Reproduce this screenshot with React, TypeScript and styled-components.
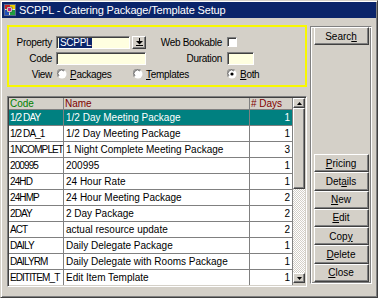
import styled, { createGlobalStyle, css } from 'styled-components';

type Pkg = { code: string; name: string; days: number };

const packages: Pkg[] = [
  { code: '1/2 DAY', name: '1/2 Day Meeting Package', days: 1 },
  { code: '1/2 DA_1', name: '1/2 Day Meeting Package', days: 1 },
  { code: '1NCOMPLET', name: '1 Night Complete Meeting Package', days: 3 },
  { code: '200995', name: '200995', days: 1 },
  { code: '24HD', name: '24 Hour Rate', days: 1 },
  { code: '24HMP', name: '24 Hour Meeting Package', days: 2 },
  { code: '2DAY', name: '2 Day Package', days: 2 },
  { code: 'ACT', name: 'actual resource update', days: 2 },
  { code: 'DAILY', name: 'Daily Delegate Package', days: 1 },
  { code: 'DAILYRM', name: 'Daily Delegate with Rooms Package', days: 1 },
  { code: 'EDITITEM_T', name: 'Edit Item Template', days: 1 }
];

const App = () => {
  return (
    <>
      <GlobalStyle />
      <Window>
        <TitleBar>
          <AppIcon />
          <span>SCPPL - Catering Package/Template Setup</span>
        </TitleBar>
        <Body>
          <LeftColumn>
            <FilterPanel>
              <Label>Property</Label>
              <FieldGroup>
                <TextField $width={74}>
                  <Selected>SCPPL</Selected>
                </TextField>
                <DropButton>
                  <svg width="7" height="8" viewBox="0 0 7 8">
                    <rect x="3" y="0" width="1" height="3" fill="#000" />
                    <path d="M0 3h7L3.5 6.5z" fill="#000" />
                    <rect x="0" y="7" width="7" height="1" fill="#000" />
                  </svg>
                </DropButton>
              </FieldGroup>
              <Label $gap={5}>Web Bookable</Label>
              <FieldGroup>
                <CheckBox />
              </FieldGroup>

              <Label>Code</Label>
              <FieldGroup>
                <TextField $width={90} />
              </FieldGroup>
              <Label $gap={5}>Duration</Label>
              <FieldGroup>
                <TextField $width={27} />
              </FieldGroup>

              <Label>View</Label>
              <ViewOptions>
                <RadioOption $width={76}>
                  <Radio />
                  <span><u>P</u>ackages</span>
                </RadioOption>
                <RadioOption>
                  <Radio />
                  <span><u>T</u>emplates</span>
                </RadioOption>
              </ViewOptions>
              <FieldGroup>
                <RadioOption>
                  <Radio checked />
                  <span><u>B</u>oth</span>
                </RadioOption>
              </FieldGroup>
            </FilterPanel>

            <TableBox>
              <Grid>
                <HeaderRow>
                  <HeaderCell $color="#008000">Code</HeaderCell>
                  <HeaderCell $color="#800000">Name</HeaderCell>
                  <HeaderCell $color="#800000"># Days</HeaderCell>
                </HeaderRow>
                {packages.map((p, i) => (
                  <Row key={p.code} $selected={i === 0}>
                    <CodeCell>{p.code}</CodeCell>
                    <Cell $pad={2}>{p.name}</Cell>
                    <Cell $right>{p.days}</Cell>
                  </Row>
                ))}
              </Grid>
              <ScrollBar>
                <ArrowButton>
                  <svg width="5" height="3" viewBox="0 0 5 3"><path d="M2.5 0L5 3H0z" fill="#000" /></svg>
                </ArrowButton>
                <Thumb />
                <Track />
                <ArrowButton>
                  <svg width="5" height="3" viewBox="0 0 5 3"><path d="M0 0h5L2.5 3z" fill="#000" /></svg>
                </ArrowButton>
              </ScrollBar>
            </TableBox>
          </LeftColumn>

          <ButtonPanel>
            <Button>Searc<u>h</u></Button>
            <ButtonStack>
              <Button><u>P</u>ricing</Button>
              <Button>Det<u>a</u>ils</Button>
              <Button><u>N</u>ew</Button>
              <Button><u>E</u>dit</Button>
              <Button>Cop<u>y</u></Button>
              <Button><u>D</u>elete</Button>
              <Button><u>C</u>lose</Button>
            </ButtonStack>
          </ButtonPanel>
        </Body>
      </Window>
    </>
  );
};

export default App;

const AppIcon = () => (
  <svg width="12" height="12" viewBox="0 0 12 12">
    <rect x="0.5" y="0.5" width="11" height="11" fill="#e8e8e8" stroke="#5a6a8a" />
    <rect x="1" y="1" width="5" height="4" fill="#d02020" />
    <rect x="6" y="1" width="5" height="4" fill="#f0d000" />
    <rect x="1" y="6" width="4" height="5" fill="#2050c0" />
    <rect x="6" y="6" width="5" height="5" fill="#20a040" />
    <rect x="3" y="3" width="5" height="5" fill="#fff" stroke="#404040" strokeWidth="0.6" />
    <rect x="4" y="4" width="3" height="3" fill="#d02080" />
  </svg>
);

const Radio = ({ checked }: { checked?: boolean }) => (
  <svg width="10" height="10" viewBox="0 0 10 10">
    <circle cx="5" cy="5" r="4.5" fill="#fff" />
    <path d="M1.2 7.8A4.3 4.3 0 0 1 7.8 1.2" fill="none" stroke="#808080" strokeWidth="1" />
    <path d="M2 7A3 3 0 0 1 7 2" fill="none" stroke="#404040" strokeWidth="0.8" />
    {checked && <circle cx="5" cy="5" r="1.6" fill="#000" />}
  </svg>
);

const GlobalStyle = createGlobalStyle`
  html, body {
    margin: 0;
    padding: 0;
    background: #d4d0c8;
  }
  body {
    font-family: "Liberation Sans", Arial, sans-serif;
  }
`;

const raised = css`
  box-sizing: border-box;
  background: #d4d0c8;
  border: 1px solid;
  border-color: #ffffff #404040 #404040 #ffffff;
  box-shadow: inset -1px -1px #808080;
`;

const sunken = css`
  box-sizing: border-box;
  border: 1px solid;
  border-color: #808080 #ffffff #ffffff #808080;
  box-shadow: inset 1px 1px #404040;
`;

const Window = styled.div`
  box-sizing: border-box;
  width: 378px;
  height: 298px;
  padding: 1px;
  display: flex;
  flex-direction: column;
  background: #d4d0c8;
  border: 1px solid;
  border-color: #d4d0c8 #404040 #404040 #d4d0c8;
  box-shadow: inset 1px 1px #ffffff, inset -1px -1px #808080;
`;

const TitleBar = styled.div`
  height: 16px;
  flex: none;
  display: flex;
  align-items: center;
  gap: 3px;
  padding-left: 2px;
  background: #0a246a;
  color: #ffffff;
  font-size: 11px;
  letter-spacing: -0.15px;
  white-space: nowrap;
`;

const Body = styled.div`
  display: grid;
  grid-template-columns: 300px 62px;
  column-gap: 3px;
  align-items: start;
  padding: 7px 0 0 5px;
  font-size: 10px;
  color: #000;
`;

const LeftColumn = styled.div`
  display: flex;
  flex-direction: column;
  gap: 9px;
`;

const FilterPanel = styled.div`
  box-sizing: border-box;
  width: 300px;
  height: 62px;
  padding-top: 8px;
  border: 2px solid #f8f800;
  display: grid;
  grid-template-columns: 47px 100px 71px 1fr;
  grid-auto-rows: 14px;
  row-gap: 2px;
  align-items: center;
  letter-spacing: -0.3px;
`;

const Label = styled.div<{ $gap?: number }>`
  text-align: right;
  padding-right: ${p => p.$gap ?? 4}px;
  white-space: nowrap;
`;

const FieldGroup = styled.div`
  display: flex;
  align-items: center;
  gap: 2px;
  height: 14px;
`;

const TextField = styled.div<{ $width: number }>`
  ${sunken};
  width: ${p => p.$width}px;
  height: 13px;
  background: #ffffe0;
  padding: 1px 0 0 2px;
  display: flex;
  align-items: center;
`;

const Selected = styled.span`
  background: #0a246a;
  color: #fff;
  padding: 0 1px;
  line-height: 10px;
`;

const DropButton = styled.div`
  ${raised};
  width: 14px;
  height: 13px;
  display: flex;
  align-items: center;
  justify-content: center;
`;

const CheckBox = styled.div`
  ${sunken};
  width: 10px;
  height: 10px;
  background: #ffffff;
`;

const ViewOptions = styled.div`
  grid-column: 2 / span 2;
  display: flex;
  align-items: center;
  padding-left: 1px;
`;

const RadioOption = styled.div<{ $width?: number }>`
  display: flex;
  align-items: center;
  gap: 3px;
  width: ${p => (p.$width ? `${p.$width}px` : 'auto')};
  white-space: nowrap;
`;

const TableBox = styled.div`
  ${sunken};
  box-shadow: inset 1px 1px #404040, inset -1px -1px #d4d0c8;
  width: 300px;
  height: 191px;
  padding: 1px;
  display: grid;
  grid-template-columns: 284px 12px;
  overflow: hidden;
  background: #d4d0c8;
`;

const Grid = styled.div`
  display: flex;
  flex-direction: column;
  overflow: hidden;
`;

const HeaderRow = styled.div`
  display: grid;
  grid-template-columns: 55px 186px 43px;
  height: 11px;
  border-bottom: 1px solid #808080;
  background: #d4d0c8;
  flex: none;
`;

const HeaderCell = styled.div<{ $color: string }>`
  color: ${p => p.$color};
  border-right: 1px solid #808080;
  padding-left: 1px;
  line-height: 11px;
  white-space: nowrap;
  overflow: hidden;
`;

const Row = styled.div<{ $selected?: boolean }>`
  display: grid;
  grid-template-columns: 55px 186px 43px;
  height: 15px;
  flex: none;
  border-bottom: 1px solid #808080;
  background: ${p => (p.$selected ? '#008080' : '#ffffff')};
  color: ${p => (p.$selected ? '#ffffff' : '#000000')};
`;

const Cell = styled.div<{ $pad?: number; $right?: boolean }>`
  border-right: 1px solid #808080;
  padding: 0 ${p => (p.$right ? 2 : 0)}px 0 ${p => p.$pad ?? 1}px;
  text-align: ${p => (p.$right ? 'right' : 'left')};
  line-height: 15px;
  white-space: nowrap;
  overflow: hidden;
`;

const CodeCell = styled(Cell)`
  letter-spacing: -0.9px;
  padding-left: 1px;
`;

const ScrollBar = styled.div`
  display: flex;
  flex-direction: column;
  padding-bottom: 2px;
`;

const ArrowButton = styled.div`
  ${raised};
  height: 10px;
  flex: none;
  display: flex;
  align-items: center;
  justify-content: center;
`;

const Thumb = styled.div`
  ${raised};
  height: 81px;
  flex: none;
`;

const Track = styled.div`
  flex: 1;
  background: repeating-conic-gradient(#ffffff 0 25%, #d4d0c8 0 50%) 0 0 / 2px 2px;
`;

const ButtonPanel = styled.div`
  box-sizing: border-box;
  height: 258px;
  margin-top: 1px;
  padding: 0 1px 1px 1px;
  display: flex;
  flex-direction: column;
  align-items: center;
  border: 1px solid;
  border-color: #808080 #ffffff #ffffff #808080;
  box-shadow: inset 1px 1px #ffffff, inset -1px -1px #808080;
`;

const ButtonStack = styled.div`
  margin-top: auto;
  height: 128px;
  display: grid;
  grid-auto-rows: 1fr;
`;

const Button = styled.div`
  ${raised};
  width: 55px;
  min-height: 18px;
  display: flex;
  align-items: center;
  justify-content: center;
  white-space: nowrap;
  font-size: 10px;
`;
